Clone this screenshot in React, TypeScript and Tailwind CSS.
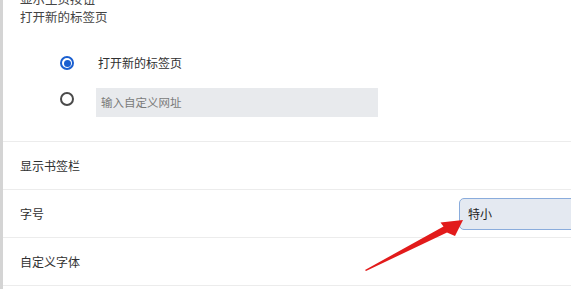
const rows = ["显示书签栏", "字号", "自定义字体"];

const App = () => {
  return (
    <div
      className="relative w-[571px] h-[289px] overflow-hidden bg-white border-l-[3px] border-[#d4d4d4] text-[#303030]"
      style={{ fontFamily: '"Noto Sans CJK SC", "Noto Sans", sans-serif' }}
    >
      <div className="-mt-[10px] pl-[17px] text-[12.5px] leading-[18px]">
        <div className="text-[#444]">显示主页按钮</div>
        <div className="text-[#444]">打开新的标签页</div>
      </div>

      <div className="mt-[19px] pl-[57px] text-[12px]">
        <div className="flex items-center h-[36px] gap-[24px]">
          <span className="flex items-center justify-center w-[14px] h-[14px] rounded-full border-2 border-[#1a5fd0]">
            <span className="w-[7px] h-[7px] rounded-full bg-[#1a5fd0]" />
          </span>
          <span>打开新的标签页</span>
        </div>
        <div className="flex items-start h-[36px] gap-[22px]">
          <span className="mt-[11px] w-[14px] h-[14px] rounded-full border-2 border-[#4a4a4a]" />
          <div className="mt-[7px] w-[282px] h-[29px] flex items-center pl-[5px] bg-[#e8eaed] text-[#7a7a7a] text-[11.5px]">
            输入自定义网址
          </div>
        </div>
      </div>

      <div className="mt-[24px] border-t border-[#ececec]">
        {rows.map((label) => (
          <div
            key={label}
            className="flex items-center h-[48px] pl-[17px] border-b border-[#ececec] text-[12px]"
          >
            <span>{label}</span>
            {label === "字号" && (
              <div className="ml-auto -mr-[14px] w-[126px] h-[32px] flex items-center pl-[8px] rounded-[5px] border-[1.5px] border-[#8aacdc] bg-[#e4e9f1] text-[12px] text-[#222]">
                特小
              </div>
            )}
          </div>
        ))}
      </div>

      {/* red arrow annotation */}
      <svg
        className="absolute left-0 top-0 pointer-events-none"
        width="571"
        height="289"
        viewBox="0 0 571 289"
      >
        <polygon
          points="362,270 440.5,226.5 437.5,222.5 460,220 452,236 444,232.5 363,271"
          fill="#e21b1b"
        />
      </svg>
    </div>
  );
};

export default App;
